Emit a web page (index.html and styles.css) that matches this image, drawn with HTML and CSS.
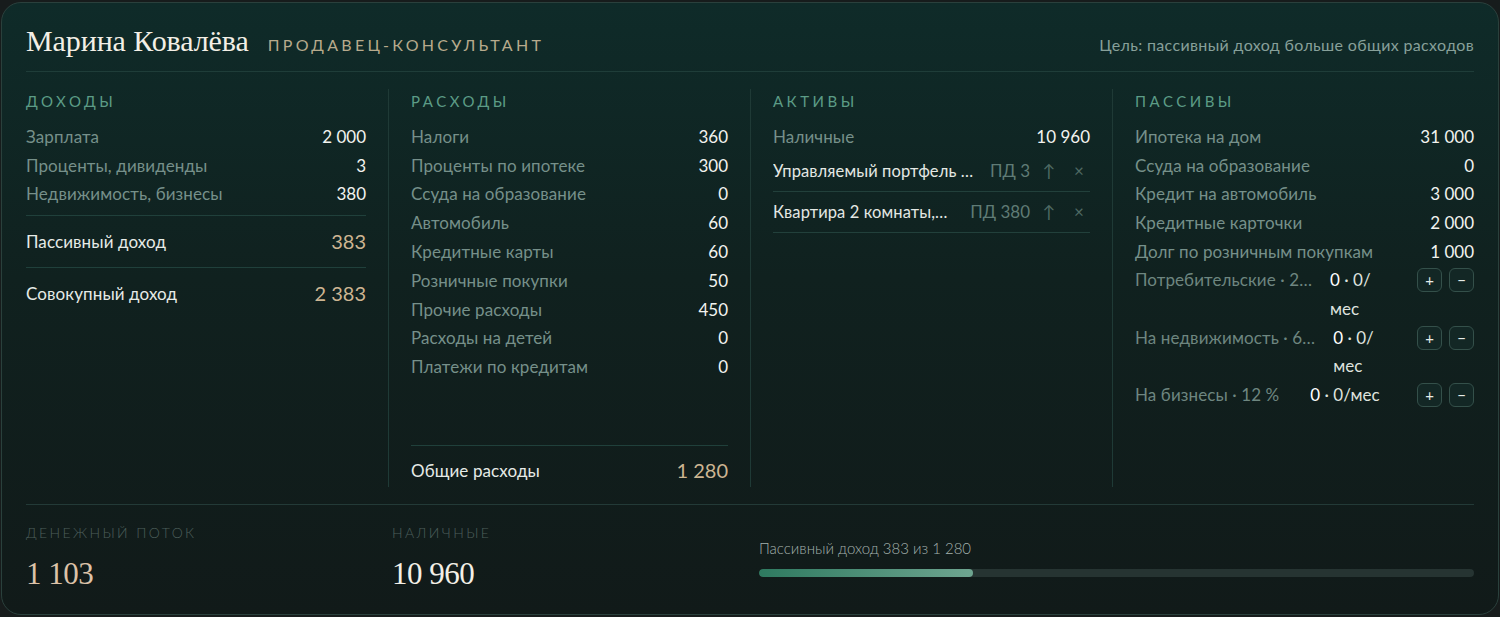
FILE: index.html
```html
<!DOCTYPE html>
<html lang="ru">
<head>
<meta charset="utf-8">
<title>Марина Ковалёва</title>
<link rel="stylesheet" href="styles.css">
</head>
<body>
<div class="card">
  <header class="head">
    <div class="who">
      <h1 class="name">Марина Ковалёва</h1>
      <span class="job">Продавец-консультант</span>
    </div>
    <div class="goal">Цель: пассивный доход больше общих расходов</div>
  </header>

  <section class="cols">
    <div class="col">
      <h2 class="ctitle">Доходы</h2>
      <div class="row"><span class="lab">Зарплата</span><span class="val">2 000</span></div>
      <div class="row"><span class="lab">Проценты, дивиденды</span><span class="val">3</span></div>
      <div class="row"><span class="lab">Недвижимость, бизнесы</span><span class="val">380</span></div>
      <div class="sum first"><span class="slab">Пассивный доход</span><span class="sval">383</span></div>
      <div class="sum"><span class="slab">Совокупный доход</span><span class="sval">2 383</span></div>
    </div>

    <div class="col">
      <h2 class="ctitle">Расходы</h2>
      <div class="row"><span class="lab">Налоги</span><span class="val">360</span></div>
      <div class="row"><span class="lab">Проценты по ипотеке</span><span class="val">300</span></div>
      <div class="row"><span class="lab">Ссуда на образование</span><span class="val">0</span></div>
      <div class="row"><span class="lab">Автомобиль</span><span class="val">60</span></div>
      <div class="row"><span class="lab">Кредитные карты</span><span class="val">60</span></div>
      <div class="row"><span class="lab">Розничные покупки</span><span class="val">50</span></div>
      <div class="row"><span class="lab">Прочие расходы</span><span class="val">450</span></div>
      <div class="row"><span class="lab">Расходы на детей</span><span class="val">0</span></div>
      <div class="row"><span class="lab">Платежи по кредитам</span><span class="val">0</span></div>
      <div class="sum total"><span class="slab">Общие расходы</span><span class="sval">1 280</span></div>
    </div>

    <div class="col">
      <h2 class="ctitle">Активы</h2>
      <div class="row"><span class="lab">Наличные</span><span class="val">10 960</span></div>
      <div class="asset">
        <span class="aname">Управляемый портфель …</span>
        <span class="pd">ПД 3</span>
        <button class="ibtn" type="button">↑</button>
        <button class="ibtn" type="button">×</button>
      </div>
      <div class="asset">
        <span class="aname">Квартира 2 комнаты,…</span>
        <span class="pd">ПД 380</span>
        <button class="ibtn" type="button">↑</button>
        <button class="ibtn" type="button">×</button>
      </div>
    </div>

    <div class="col">
      <h2 class="ctitle">Пассивы</h2>
      <div class="row"><span class="lab">Ипотека на дом</span><span class="val">31 000</span></div>
      <div class="row"><span class="lab">Ссуда на образование</span><span class="val">0</span></div>
      <div class="row"><span class="lab">Кредит на автомобиль</span><span class="val">3 000</span></div>
      <div class="row"><span class="lab">Кредитные карточки</span><span class="val">2 000</span></div>
      <div class="row"><span class="lab">Долг по розничным покупкам</span><span class="val">1 000</span></div>
      <div class="loan">
        <span class="llab">Потребительские · 2…</span>
        <span class="lval narrow"><b>0</b> · 0/<wbr>мес</span>
        <span class="btns"><button class="sbtn" type="button">+</button><button class="sbtn" type="button">−</button></span>
      </div>
      <div class="loan">
        <span class="llab">На недвижимость · 6…</span>
        <span class="lval narrow"><b>0</b> · 0/<wbr>мес</span>
        <span class="btns"><button class="sbtn" type="button">+</button><button class="sbtn" type="button">−</button></span>
      </div>
      <div class="loan">
        <span class="llab">На бизнесы · 12 %</span>
        <span class="lval"><b>0</b> · 0/мес</span>
        <span class="btns"><button class="sbtn" type="button">+</button><button class="sbtn" type="button">−</button></span>
      </div>
    </div>
  </section>

  <footer class="foot">
    <div class="stat">
      <div class="flab">Денежный поток</div>
      <div class="fnum gold">1 103</div>
    </div>
    <div class="stat">
      <div class="flab">Наличные</div>
      <div class="fnum">10 960</div>
    </div>
    <div class="prog">
      <div class="ptext">Пассивный доход 383 из 1 280</div>
      <div class="bar"><div class="fill" style="width: 29.9%"></div></div>
    </div>
  </footer>
</div>
</body>
</html>
```

FILE: styles.css
```css
* { box-sizing: border-box; }
html, body { margin: 0; padding: 0; }
body {
  background: #171c1c;
  padding: 2px 1px 2px 1px;
  font-family: "Lato", "Noto Sans", sans-serif;
  color: #e9ece8;
}
.card {
  height: 613px;
  border: 1px solid #2a403c;
  border-radius: 20px;
  background: linear-gradient(180deg, #0f2b29 0%, #10211f 45%, #111a19 100%);
  padding: 0 24px 0 24px;
  display: flex;
  flex-direction: column;
}
.head {
  display: flex;
  justify-content: space-between;
  align-items: baseline;
  padding: 21px 0 13px;
  border-bottom: 1px solid #1f3d39;
}
.who { display: flex; align-items: baseline; gap: 19px; }
.name {
  margin: 0;
  font-family: "Liberation Serif", "DejaVu Serif", serif;
  font-weight: normal;
  font-size: 30px;
  line-height: 34px;
  color: #f3efe6;
  letter-spacing: -0.1px;
}
.job {
  font-size: 16px;
  letter-spacing: 3.3px;
  text-transform: uppercase;
  color: #b7aa8c;
  font-weight: 400;
}
.goal {
  font-size: 16px;
  color: #87a09a;
  font-weight: 400;
  letter-spacing: 0.35px;
}
.cols {
  display: grid;
  grid-template-columns: repeat(4, 1fr);
  margin-top: 17px;
  height: 398px;
}
.col {
  padding: 0 22px;
  border-left: 1px solid #1f3a36;
  display: flex;
  flex-direction: column;
}
.col:first-child { padding-left: 0; border-left: none; }
.col:last-child { padding-right: 0; }
.ctitle {
  margin: 2px 0 11px;
  font-size: 15px;
  line-height: 20px;
  font-weight: 400;
  letter-spacing: 3.5px;
  text-transform: uppercase;
  color: #5c9c86;
}
.row {
  display: flex;
  justify-content: space-between;
  align-items: center;
  height: 28.8px;
  font-size: 17px;
}
.lab { color: #76908a; font-weight: 400; letter-spacing: 0.1px; }
.val { color: #f2f3ef; }
.sum {
  display: flex;
  justify-content: space-between;
  align-items: center;
  border-top: 1px solid #20403b;
  padding: 12px 0;
  line-height: 27px;
}
.sum.first { margin-top: 7px; }
.slab { font-size: 17px; color: #e6ebe7; letter-spacing: 0.1px; }
.sval { font-size: 20px; color: #cdb592; }
.sum.total { margin-top: auto; padding: 11px 0 3px; }
.asset {
  display: flex;
  align-items: center;
  border-bottom: 1px solid #22403b;
  padding: 7px 0 7px;
  line-height: 26px;
  font-size: 16.5px;
}
.aname {
  flex: 1;
  min-width: 0;
  white-space: nowrap;
  overflow: hidden;
  text-overflow: ellipsis;
  color: #e4e8e4;
  letter-spacing: 0.1px;
}
.pd { color: #5f7b75; font-size: 17px; margin-left: 10px; }
.ibtn {
  width: 22px;
  height: 24px;
  margin-left: 8px;
  padding: 0;
  border: none;
  background: none;
  color: #4f6a64;
  font-family: "Lato", sans-serif;
  font-size: 17px;
  line-height: 24px;
}
.loan {
  display: flex;
  align-items: flex-start;
  font-size: 17px;
  line-height: 28.8px;
}
.llab {
  flex: 0 1 auto;
  max-width: 190px;
  white-space: nowrap;
  overflow: hidden;
  text-overflow: ellipsis;
  color: #6e8680;
  letter-spacing: 0.1px;
}
.lval {
  flex: 1;
  min-width: 0;
  margin-left: 31px;
  color: #dfe3df;
}
.lval.narrow { max-width: 62px; margin-left: 18px; }
.lval b { font-weight: 400; color: #ffffff; }
.btns { display: flex; gap: 7px; margin-left: auto; padding-top: 2px; }
.sbtn {
  width: 25px;
  height: 24px;
  padding: 0;
  border: 1px solid #34504a;
  border-radius: 6px;
  background: #132725;
  color: #e6ece8;
  font-family: "Lato", sans-serif;
  font-size: 15px;
  line-height: 20px;
}
.foot {
  margin-top: 17px;
  border-top: 1px solid #233a37;
  display: grid;
  grid-template-columns: 366px 367px 1fr;
  padding-top: 19px;
}
.flab {
  font-size: 14px;
  letter-spacing: 2.4px;
  text-transform: uppercase;
  color: #4d5f5b;
  font-weight: 300;
  line-height: 18px;
}
.fnum {
  margin-top: 14px;
  font-family: "Liberation Serif", "DejaVu Serif", serif;
  font-size: 31px;
  line-height: 36px;
  color: #f3efe6;
  letter-spacing: -0.5px;
}
.fnum.gold { color: #dcc2a8; }
.prog { padding-top: 15px; }
.ptext {
  font-size: 15px;
  font-weight: 300;
  color: #a3b1ad;
  line-height: 18px;
  letter-spacing: 0;
}
.bar {
  margin-top: 12px;
  height: 8px;
  border-radius: 4px;
  background: #263432;
  overflow: hidden;
}
.fill {
  height: 100%;
  border-radius: 4px;
  background: linear-gradient(90deg, #2e7a60, #6ea590);
}
```
